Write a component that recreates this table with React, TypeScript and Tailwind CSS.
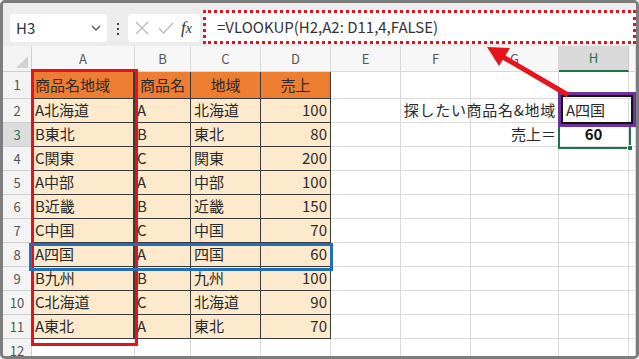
import React from 'react'

const jp = '"Noto Sans CJK JP", "Noto Sans", sans-serif'

const colLetters = ['A', 'B', 'C', 'D', 'E', 'F', 'G', 'H', '']

const rows: { a: string; b: string; c: string; d: string }[] = [
  { a: 'A北海道', b: 'A', c: '北海道', d: '100' },
  { a: 'B東北', b: 'B', c: '東北', d: '80' },
  { a: 'C関東', b: 'C', c: '関東', d: '200' },
  { a: 'A中部', b: 'A', c: '中部', d: '100' },
  { a: 'B近畿', b: 'B', c: '近畿', d: '150' },
  { a: 'C中国', b: 'C', c: '中国', d: '70' },
  { a: 'A四国', b: 'A', c: '四国', d: '60' },
  { a: 'B九州', b: 'B', c: '九州', d: '100' },
  { a: 'C北海道', b: 'C', c: '北海道', d: '90' },
  { a: 'A東北', b: 'A', c: '東北', d: '70' },
]

const grid = 'border-r border-b border-[#dadada]'
const data = 'border-r border-b border-[#3a3a3a] bg-[#fde9cc]'

function FormulaBar() {
  return (
    <div className="flex h-[43px] items-start bg-[#ececec]">
      {/* Name box */}
      <div className="ml-[7px] mt-[11px] flex h-[28px] w-[97px] items-center justify-between rounded-[4px] bg-white pl-[6px] pr-[6px] text-[15px] text-[#333]">
        <span>H3</span>
        <svg width="10" height="6" viewBox="0 0 10 6">
          <path d="M1 1l4 4 4-4" fill="none" stroke="#555" strokeWidth="1.3" />
        </svg>
      </div>

      {/* dots */}
      <div className="mt-[20px] flex w-[21px] flex-col items-center gap-[3px]">
        <span className="h-[2px] w-[2px] bg-[#444]" />
        <span className="h-[2px] w-[2px] bg-[#444]" />
        <span className="h-[2px] w-[2px] bg-[#444]" />
      </div>

      {/* cancel / enter / fx */}
      <div className="mt-[11px] flex h-[28px] w-[72px] items-center rounded-[4px] bg-white pl-[6px]">
        <svg width="14" height="14" viewBox="0 0 14 14" className="ml-[1px]">
          <path d="M1 1l12 12M13 1L1 13" stroke="#b8b8b8" strokeWidth="1.2" />
        </svg>
        <svg width="16" height="12" viewBox="0 0 16 12" className="ml-[9px]">
          <path d="M1 6l4.5 5L15 1" fill="none" stroke="#b8b8b8" strokeWidth="1.2" />
        </svg>
        <span
          className="ml-[7px] text-[17px] italic text-[#333]"
          style={{ fontFamily: '"Liberation Serif", serif' }}
        >
          f<span className="text-[14px]">x</span>
        </span>
      </div>

      {/* formula */}
      <div className="ml-[3px] mt-[7px] flex h-[34px] flex-1 items-center border-[3px] border-dotted border-[#e0141e] bg-white pl-[11px] text-[15px] text-[#333]">
        =VLOOKUP(H2,A2: D11,4,FALSE)
      </div>
    </div>
  )
}

function RowHead({ n, active }: { n: number; active?: boolean }) {
  return (
    <div
      className={`flex items-center justify-center border-r border-b border-[#d0d0d0] text-[13px] ${
        active ? 'bg-[#dcdcdc] text-[#217346]' : 'bg-[#f3f3f3] text-[#555]'
      }`}
    >
      {n}
    </div>
  )
}

function Sheet() {
  return (
    <div
      className="grid grid-cols-[29px_103px_56px_70px_70px_70px_70px_88px_70px_1fr] grid-rows-[26px_27px_repeat(11,24px)] text-[15px] text-[#2a2a2a]"
      style={{ fontFamily: jp }}
    >
      {/* header row */}
      <div className="flex items-end justify-end border-r border-b border-[#d0d0d0] bg-[#f3f3f3] p-[3px]">
        <svg width="12" height="12" viewBox="0 0 12 12">
          <polygon points="12,0 12,12 0,12" fill="#d2d2d2" />
        </svg>
      </div>
      {colLetters.map((c, i) =>
        c === 'H' ? (
          <div
            key={i}
            className="flex items-center justify-center border-r border-b-2 border-r-[#c8c8c8] border-b-[#217346] bg-[#d9d9d9] text-[13px] text-[#217346]"
          >
            {c}
          </div>
        ) : (
          <div
            key={i}
            className="flex items-center justify-center border-r border-b border-[#d8d8d8] bg-[#f7f7f7] text-[13px] text-[#555]"
          >
            {c}
          </div>
        )
      )}

      {/* row 1 */}
      <RowHead n={1} />
      <div className="flex items-center border-r-2 border-b border-[#3a3a3a] bg-[#ed7d31] pl-[3px]">商品名地域</div>
      <div className="flex items-center justify-center border-r border-b border-[#3a3a3a] bg-[#ed7d31]">商品名</div>
      <div className="flex items-center justify-center border-r border-b border-[#3a3a3a] bg-[#ed7d31]">地域</div>
      <div className="flex items-center justify-center border-r border-b border-[#3a3a3a] bg-[#ed7d31]">売上</div>
      <div className={grid} />
      <div className={grid} />
      <div className={grid} />
      <div className={grid} />
      <div className={grid} />

      {rows.map((r, i) => {
        const n = i + 2
        return (
          <React.Fragment key={n}>
            <RowHead n={n} active={n === 3} />
            <div className={`flex items-center pl-[3px] ${data} border-r-2`}>{r.a}</div>
            <div className={`flex items-center pl-[2px] ${data}`}>{r.b}</div>
            <div className={`flex items-center pl-[3px] ${data}`}>{r.c}</div>
            <div className={`flex items-center justify-end pr-[3px] ${data}`}>{r.d}</div>
            <div className={grid} />
            <div className={grid} />
            {n === 2 ? (
              <div className={`relative ${grid}`}>
                <span className="absolute right-[2px] top-0 flex h-full items-center whitespace-nowrap tracking-[0.7px]">
                  探したい商品名&amp;地域
                </span>
              </div>
            ) : n === 3 ? (
              <div className={`flex items-center justify-end pr-[2px] ${grid}`}>売上＝</div>
            ) : (
              <div className={grid} />
            )}
            {n === 2 ? (
              <div className={`flex items-center pl-[7px] ${grid}`}>A四国</div>
            ) : n === 3 ? (
              <div className={`flex items-center justify-center font-bold text-[#111] ${grid}`}>60</div>
            ) : (
              <div className={grid} />
            )}
            <div className={grid} />
          </React.Fragment>
        )
      })}

      {/* row 12 */}
      <RowHead n={12} />
      {colLetters.map((_, i) => (
        <div key={i} className={grid} />
      ))}
    </div>
  )
}

function Overlays() {
  return (
    <div className="pointer-events-none absolute -left-[3px] -top-[3px] h-[359px] w-[639px]">
      {/* red: column A */}
      <div className="absolute left-[31px] top-[69px] h-[277px] w-[107px] border-[3px] border-[#e3121b]" />
      {/* blue: row 8 */}
      <div className="absolute left-[29px] top-[243px] h-[28px] w-[304px] border-[3px] border-[#1f70b8]" />
      {/* green selection H3 */}
      <div className="absolute left-[558px] top-[123px] h-[26px] w-[73px] border-2 border-[#217346]" />
      <div className="absolute left-[627px] top-[145px] h-[6px] w-[6px] border border-white bg-[#217346]" />
      {/* purple: H2 */}
      <div className="absolute left-[558px] top-[92px] h-[35px] w-[78px] border-[3px] border-[#7030a0]">
        <div className="h-full w-full border-2 border-[#111]" />
      </div>
      {/* arrow */}
      <svg className="absolute left-0 top-0" width="639" height="359" viewBox="0 0 639 359">
        <line x1="568" y1="95" x2="503" y2="57" stroke="#e8141c" strokeWidth="5" />
        <polygon points="487,47 510,48 499,66" fill="#e8141c" />
      </svg>
    </div>
  )
}

export default function App() {
  return (
    <div
      className="relative h-[359px] w-[639px] overflow-hidden rounded-[5px] border-[3px] border-[#7d7d7d] bg-white"
      style={{ fontFamily: jp }}
    >
      <FormulaBar />
      <Sheet />
      <Overlays />
    </div>
  )
}
